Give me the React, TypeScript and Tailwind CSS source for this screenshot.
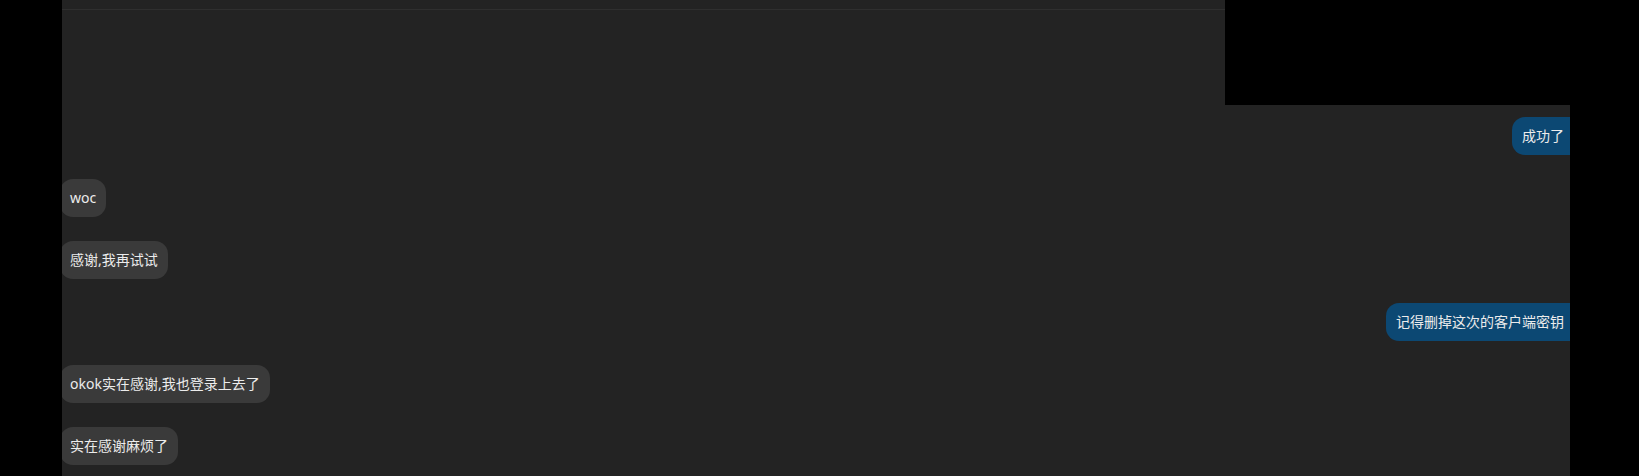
const messages: { side: "left" | "right"; text: string }[] = [
  { side: "right", text: "成功了" },
  { side: "left", text: "woc" },
  { side: "left", text: "感谢,我再试试" },
  { side: "right", text: "记得删掉这次的客户端密钥" },
  { side: "left", text: "okok实在感谢,我也登录上去了" },
  { side: "left", text: "实在感谢麻烦了" },
];

function Bubble({ side, text }: { side: "left" | "right"; text: string }) {
  const isMine = side === "right";
  return (
    <div className={isMine ? "flex justify-end mr-[-4px]" : "flex justify-start ml-[-2px]"}>
      <div
        className={`px-[10px] py-[9px] text-[14px] leading-5 text-[#ececec] ${
          isMine ? "rounded-l-[13px] rounded-r-[4px] bg-[#0c4873]" : "rounded-[13px] bg-[#3a3a3a]"
        }`}
      >
        {text}
      </div>
    </div>
  );
}

export default function App() {
  return (
    <div
      className="flex h-[476px] w-[1639px] overflow-hidden bg-black"
      style={{ fontFamily: '"Noto Sans", "Noto Sans CJK SC", sans-serif' }}
    >
      <div className="w-[62px] shrink-0" />
      <div className="flex w-[1508px] shrink-0 flex-col">
        <div className="flex h-[105px] shrink-0">
          <div className="w-[1163px] bg-[#232323]">
            <div className="h-[10px] border-b border-[#2f2f2f]" />
          </div>
          <div className="flex-1 bg-black" />
        </div>
        <div className="flex flex-1 flex-col gap-6 overflow-hidden bg-[#232323] pt-3">
          {messages.map((m, i) => (
            <Bubble key={i} side={m.side} text={m.text} />
          ))}
        </div>
      </div>
    </div>
  );
}
